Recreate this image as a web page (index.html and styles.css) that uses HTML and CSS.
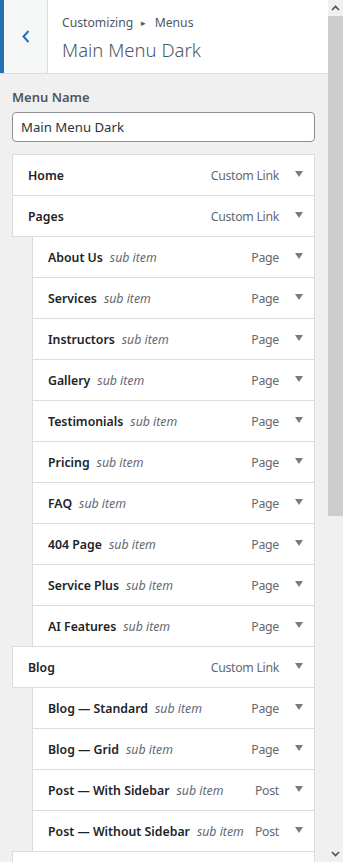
FILE: index.html
```html
<!doctype html>
<html lang="en">
<head>
    <meta charset="UTF-8">
    <link rel="stylesheet" href="styles.css">
    <title>Customizing Menus</title>
</head>
<body>
    <div class="screen">
        <div class="panel">
            <div class="head">
                <button class="back" aria-label="Back">
                    <svg width="8" height="13" viewBox="0 0 8 13"><path d="M6.5 1 L1.5 6.5 L6.5 12" fill="none" stroke="#2271b1" stroke-width="2"/></svg>
                </button>
                <div class="titles">
                    <div class="crumb">Customizing <span class="sep">&#9656;</span> Menus</div>
                    <h1>Main Menu Dark</h1>
                </div>
            </div>

            <div class="section">
                <label class="name-label" for="menu-name">Menu Name</label>
                <input id="menu-name" class="name-input" type="text" value="Main Menu Dark">

                <ul class="menu">
                    <li class="item"><span class="title">Home</span><span class="type">Custom Link</span><span class="arrow"></span></li>
                    <li class="item"><span class="title">Pages</span><span class="type">Custom Link</span><span class="arrow"></span></li>
                    <li class="item sub"><span class="title">About Us</span><em>sub item</em><span class="type">Page</span><span class="arrow"></span></li>
                    <li class="item sub"><span class="title">Services</span><em>sub item</em><span class="type">Page</span><span class="arrow"></span></li>
                    <li class="item sub"><span class="title">Instructors</span><em>sub item</em><span class="type">Page</span><span class="arrow"></span></li>
                    <li class="item sub"><span class="title">Gallery</span><em>sub item</em><span class="type">Page</span><span class="arrow"></span></li>
                    <li class="item sub"><span class="title">Testimonials</span><em>sub item</em><span class="type">Page</span><span class="arrow"></span></li>
                    <li class="item sub"><span class="title">Pricing</span><em>sub item</em><span class="type">Page</span><span class="arrow"></span></li>
                    <li class="item sub"><span class="title">FAQ</span><em>sub item</em><span class="type">Page</span><span class="arrow"></span></li>
                    <li class="item sub"><span class="title">404 Page</span><em>sub item</em><span class="type">Page</span><span class="arrow"></span></li>
                    <li class="item sub"><span class="title">Service Plus</span><em>sub item</em><span class="type">Page</span><span class="arrow"></span></li>
                    <li class="item sub"><span class="title">AI Features</span><em>sub item</em><span class="type">Page</span><span class="arrow"></span></li>
                    <li class="item"><span class="title">Blog</span><span class="type">Custom Link</span><span class="arrow"></span></li>
                    <li class="item sub"><span class="title">Blog — Standard</span><em>sub item</em><span class="type">Page</span><span class="arrow"></span></li>
                    <li class="item sub"><span class="title">Blog — Grid</span><em>sub item</em><span class="type">Page</span><span class="arrow"></span></li>
                    <li class="item sub"><span class="title">Post — With Sidebar</span><em>sub item</em><span class="type">Post</span><span class="arrow"></span></li>
                    <li class="item sub"><span class="title">Post — Without Sidebar</span><em>sub item</em><span class="type">Post</span><span class="arrow"></span></li>
                    <li class="item"><span class="arrow"></span></li>
                </ul>
            </div>
        </div>

        <!-- fake window scrollbar -->
        <div class="scrollbar">
            <div class="sb-btn">
                <svg width="9" height="6" viewBox="0 0 9 6"><path d="M1 5 L4.5 1.5 L8 5" fill="none" stroke="#505050" stroke-width="1.6"/></svg>
            </div>
            <div class="sb-thumb"></div>
            <div class="sb-track"></div>
            <div class="sb-btn">
                <svg width="9" height="6" viewBox="0 0 9 6"><path d="M1 1 L4.5 4.5 L8 1" fill="none" stroke="#505050" stroke-width="1.6"/></svg>
            </div>
        </div>
    </div>
</body>
</html>
```

FILE: styles.css
```css
html, body {
    margin: 0;
    height: 100%;
    overflow: hidden;
}

body {
    font-family: "Noto Sans", "Open Sans", sans-serif;
    font-size: 13px;
    color: #50575e;
    background-color: #f0f0f1;
}

.screen {
    display: flex;
    height: 862px;
}

.panel {
    flex: 1;
    overflow: hidden;
    background-color: #f0f0f1;
}

/* header */
.head {
    display: flex;
    height: 73px;
    background-color: #fff;
    border-bottom: 1px solid #dcdcde;
}

.back {
    width: 48px;
    padding: 0 0 1px 0;
    border: none;
    border-left: 4px solid #2271b1;
    border-right: 1px solid #dcdcde;
    background-color: #f6f7f7;
    display: flex;
    align-items: center;
    justify-content: center;
}

.titles {
    padding: 13px 0 0 14px;
}

.crumb {
    font-size: 12.2px;
    line-height: 20px;
    color: #50575e;
}

.crumb .sep {
    font-size: 9px;
    margin: 0 5px;
    position: relative;
    top: -1px;
}

.titles h1 {
    margin: 3px 0 0 0;
    font-size: 18.5px;
    font-weight: 300;
    line-height: 26px;
    color: #50575e;
}

/* menu name */
.section {
    padding: 12px 13px 0 12px;
}

.name-label {
    display: block;
    font-size: 13px;
    font-weight: 600;
    line-height: 22px;
    color: #50575e;
}

.name-input {
    display: block;
    box-sizing: border-box;
    width: 100%;
    height: 30px;
    margin-top: 4px;
    padding: 0 8px;
    font-family: inherit;
    font-size: 13.2px;
    color: #2c3338;
    border: 1px solid #8c8f94;
    border-radius: 4px;
    background-color: #fff;
}

/* menu items */
.menu {
    list-style: none;
    margin: 12px 0 0 0;
    padding: 0;
}

.item {
    display: flex;
    align-items: center;
    box-sizing: border-box;
    height: 42px;
    margin-top: -1px;
    padding: 1px 5px 0 15px;
    border: 1px solid #dcdcde;
    background-color: #fff;
    font-size: 12.3px;
    white-space: nowrap;
}

.item:first-child {
    margin-top: 0;
}

.item.sub {
    margin-left: 20px;
}

.item .title {
    font-weight: 600;
    color: #1d2327;
}

.item em {
    margin-left: 7px;
    color: #646970;
}

.item .type {
    margin-left: auto;
    padding-left: 8px;
    letter-spacing: -0.3px;
    color: #646970;
}

.item .arrow {
    width: 20px;
    height: 20px;
    margin-left: 10px;
    display: flex;
    align-items: center;
    justify-content: center;
}

.item .arrow::after {
    content: "";
    border-left: 4px solid transparent;
    border-right: 4px solid transparent;
    border-top: 6px solid #787c82;
    margin-top: -3px;
}

/* scrollbar */
.scrollbar {
    width: 15px;
    display: flex;
    flex-direction: column;
    background-color: #f0f0f0;
}

.sb-btn {
    height: 16px;
    display: flex;
    align-items: center;
    justify-content: center;
}

.sb-thumb {
    height: 500px;
    background-color: #cdcdcd;
}

.sb-track {
    flex: 1;
}
```
